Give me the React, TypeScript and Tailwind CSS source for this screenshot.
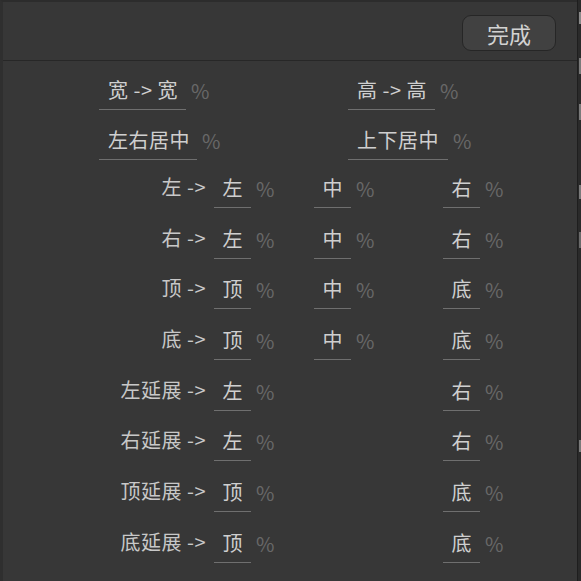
import React from "react";

const font = { fontFamily: '"Noto Sans CJK SC", "Noto Sans", sans-serif' };

function Pct() {
  return <span className="ml-[5px] text-[20px] leading-[28px] pb-[5px] text-[#686868]">%</span>;
}

function Field({ text }: { text: string }) {
  return (
    <div className="flex items-end">
      <div className="w-[37px] border-b border-[#6f6f6f] text-center text-[20px] leading-[28px] pb-[5px] text-[#cfcfcf]">
        {text}
      </div>
      <Pct />
    </div>
  );
}

function WideField({ text, w }: { text: string; w: string }) {
  return (
    <div className="flex items-end">
      <div className={`${w} border-b border-[#6f6f6f] pl-[9px] text-[20px] leading-[28px] pb-[5px] text-[#cfcfcf] whitespace-pre tracking-[0.5px]`}>
        {text}
      </div>
      <Pct />
    </div>
  );
}

type Row = { label: string; a: string; b?: string; c: string };

const rows: Row[] = [
  { label: "左 ->", a: "左", b: "中", c: "右" },
  { label: "右 ->", a: "左", b: "中", c: "右" },
  { label: "顶 ->", a: "顶", b: "中", c: "底" },
  { label: "底 ->", a: "顶", b: "中", c: "底" },
  { label: "左延展 ->", a: "左", c: "右" },
  { label: "右延展 ->", a: "左", c: "右" },
  { label: "顶延展 ->", a: "顶", c: "底" },
  { label: "底延展 ->", a: "顶", c: "底" },
];

export default function App() {
  return (
    <div className="w-[581px] h-[581px] flex bg-[#262626] overflow-hidden" style={font}>
      <div className="w-[577px] h-full flex flex-col bg-[#373737] border-t-2 border-t-[#2c2c2c] border-l-[3px] border-l-[#2f2f2f]">
        <div className="h-[59px] flex justify-end items-start pt-[13px] pr-[21px] border-b border-[#272727]">
          <button className="w-[94px] h-[36px] rounded-[9px] bg-[#414141] border border-[#262626] text-[22px] leading-none text-[#d2d2d2]">
            完成
          </button>
        </div>
        <div className="flex flex-col">
          <div className="h-[49px] flex items-end">
            <div className="w-[96px]" />
            <div className="w-[249px]">
              <WideField text="宽 -> 宽" w="w-[87px]" />
            </div>
            <WideField text="高 -> 高" w="w-[87px]" />
          </div>
          <div className="h-[50px] flex items-end">
            <div className="w-[96px]" />
            <div className="w-[249px]">
              <WideField text="左右居中" w="w-[98px]" />
            </div>
            <WideField text="上下居中" w="w-[100px]" />
          </div>
          {rows.map((r, i) => (
            <div key={i} className={`${i === 0 ? "h-[48px]" : "h-[50.7px]"} flex items-end`}>
              <div className="w-[211px] pr-[8px] text-right text-[20px] leading-[28px] pb-[7px] text-[#c8c8c8] whitespace-pre tracking-[0.5px]">
                {r.label}
              </div>
              <div className="w-[100px]">
                <Field text={r.a} />
              </div>
              <div className="w-[129px]">{r.b ? <Field text={r.b} /> : null}</div>
              <Field text={r.c} />
            </div>
          ))}
        </div>
      </div>
      <div className="w-[1px] h-full bg-[#1e1e1e]" />
      <div className="flex-1 h-full bg-[#2a2a2a] relative">
        <div className="absolute left-[1px] top-[12px] w-[2px] h-[12px] bg-[#8a8a8a]" />
        <div className="absolute left-[1px] top-[58px] w-[2px] h-[16px] bg-[#7a7a7a]" />
        <div className="absolute left-[1px] top-[104px] w-[2px] h-[16px] bg-[#7a7a7a]" />
        <div className="absolute left-[1px] top-[185px] w-[2px] h-[14px] bg-[#7a7a7a]" />
        <div className="absolute left-[1px] top-[232px] w-[2px] h-[16px] bg-[#6a6a6a]" />
        <div className="absolute left-[1px] top-[440px] w-[2px] h-[12px] bg-[#7a7a7a]" />
      </div>
    </div>
  );
}
